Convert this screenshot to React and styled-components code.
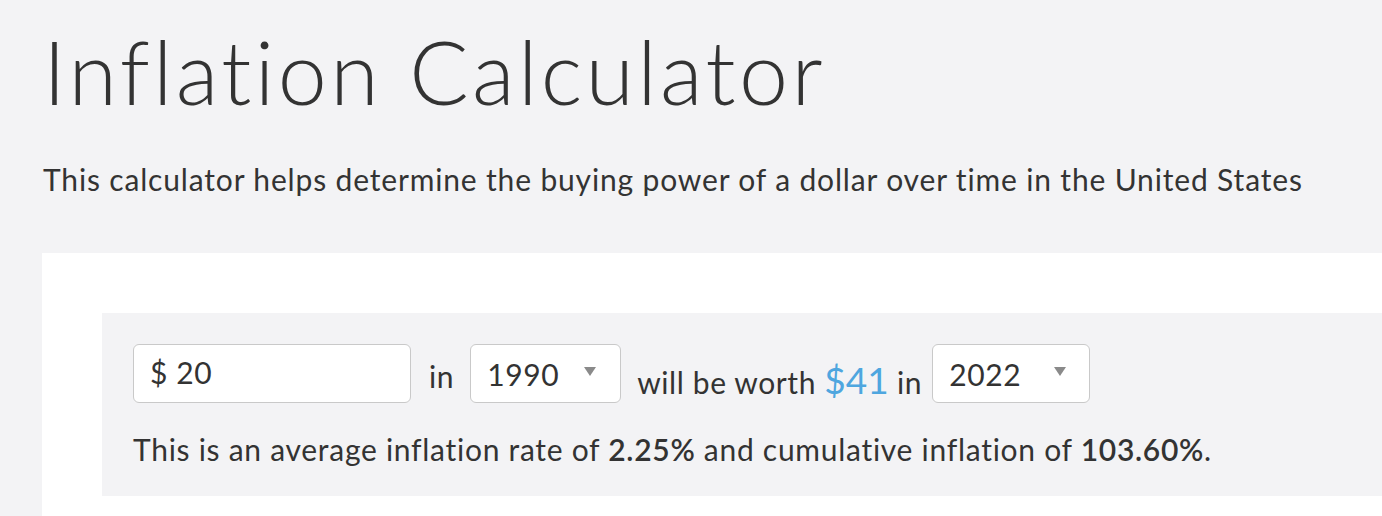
import React from "react";
import styled, { createGlobalStyle } from "styled-components";

const GlobalStyle = createGlobalStyle`
  html, body {
    margin: 0;
    padding: 0;
    overflow: hidden;
    background: #f3f3f5;
  }
  body {
    font-family: "Lato", "Noto Sans", sans-serif;
    font-variant-ligatures: none;
    color: #333333;
  }
`;

const Page = styled.div`
  padding: 19px 0 0 42px;
`;

const Title = styled.h1`
  margin: 0 0 0 1px;
  font-size: 88px;
  line-height: 1.2;
  font-weight: 300;
  letter-spacing: 3.35px;
  color: #333333;
  white-space: nowrap;
`;

const Subtitle = styled.p`
  margin: 36px 0 0 1px;
  font-size: 30px;
  line-height: 36px;
  font-weight: 400;
  letter-spacing: 0.84px;
  color: #333333;
  white-space: nowrap;
`;

const Card = styled.section`
  margin-top: 56px;
  margin-right: -200px;
  background: #ffffff;
  padding: 60px;
`;

const Panel = styled.div`
  background: #f3f3f5;
  padding: 31px 31px 29px;
`;

const FormRow = styled.div`
  display: flex;
  align-items: flex-start;
  height: 59px;
`;

const AmountInput = styled.input`
  box-sizing: border-box;
  width: 278px;
  height: 59px;
  margin: 0;
  padding: 0 0 2px 16px;
  border: 1px solid #c9c9c9;
  border-radius: 6px;
  background: #ffffff;
  font-family: inherit;
  font-size: 30px;
  letter-spacing: 0.6px;
  color: #333333;
  outline: none;
`;

const Label = styled.span`
  margin: 14px 16px 0 18px;
  font-size: 30px;
  line-height: 36px;
  letter-spacing: 0.6px;
`;

const Select = styled.div`
  box-sizing: border-box;
  position: relative;
  width: ${(p) => p.$width}px;
  height: 59px;
  padding: 11px 0 0 16px;
  border: 1px solid #c9c9c9;
  border-radius: 6px;
  background: #ffffff;
  font-size: 30px;
  line-height: 36px;
  letter-spacing: 0.6px;
`;

const Caret = styled.span`
  position: absolute;
  top: 22px;
  right: ${(p) => p.$right}px;
  width: 0;
  height: 0;
  border-left: 6px solid transparent;
  border-right: 6px solid transparent;
  border-top: 9px solid #8a8a8a;
`;

const Phrase = styled.span`
  margin: 12.5px 10px 0 16px;
  font-size: 30px;
  line-height: 48px;
  letter-spacing: 0.6px;
  white-space: nowrap;
`;

const Worth = styled.span`
  font-size: 37px;
  line-height: 48px;
  letter-spacing: 0;
  color: #4ea6df;
`;

const Result = styled.p`
  margin: 28px 0 0 0;
  font-size: 30px;
  line-height: 36px;
  letter-spacing: 0.72px;
  white-space: nowrap;
`;

const Strong = styled.b`
  font-weight: 600;
`;

export default function App() {
  return (
    <>
      <GlobalStyle />
      <Page>
        <Title>Inflation Calculator</Title>
        <Subtitle>
          This calculator helps determine the buying power of a dollar over time in the United States
        </Subtitle>
        <Card>
          <Panel>
            <FormRow>
              <AmountInput readOnly value="$ 20" />
              <Label>in</Label>
              <Select $width={151}>
                1990
                <Caret $right={24} />
              </Select>
              <Phrase>
                will be worth <Worth>$41</Worth> in
              </Phrase>
              <Select $width={158}>
                2022
                <Caret $right={23} />
              </Select>
            </FormRow>
            <Result>
              This is an average inflation rate of <Strong>2.25%</Strong> and cumulative inflation of{" "}
              <Strong>103.60%</Strong>.
            </Result>
          </Panel>
        </Card>
      </Page>
    </>
  );
}
